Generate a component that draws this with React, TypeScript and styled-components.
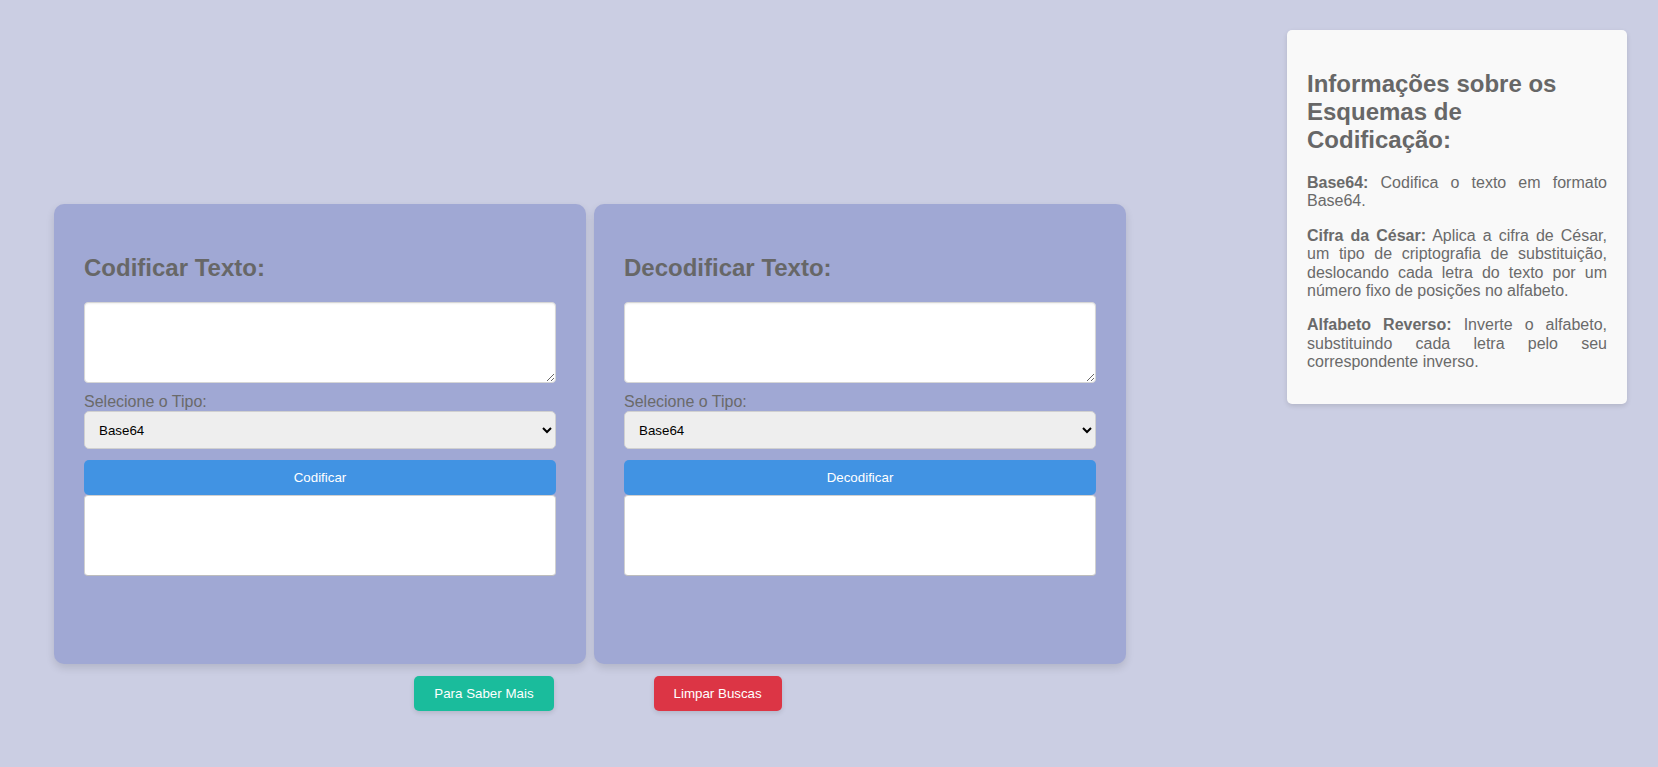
import React from "react";
import styled, { createGlobalStyle } from "styled-components";

const GlobalStyle = createGlobalStyle`
  html, body {
    margin: 0;
    padding: 0;
  }
  body {
    background: #cbcee3;
    font-family: "Liberation Sans", Arial, sans-serif;
    color: #666;
  }
`;

const Page = styled.div`
  display: flex;
  justify-content: space-between;
  align-items: flex-start;
  min-height: 767px;
  padding-right: 31px;
  box-sizing: border-box;
`;

const Main = styled.main`
  display: flex;
  flex-direction: column;
  padding-top: 204px;
`;

const Cards = styled.div`
  display: flex;
  gap: 8px;
  margin-left: 54px;
`;

const Card = styled.section`
  width: 472px;
  height: 400px;
  padding: 30px;
  background: #a0a8d4;
  border-radius: 10px;
  box-shadow: 0 4px 8px rgba(0, 0, 0, 0.12);
  display: flex;
  flex-direction: column;
`;

const CardTitle = styled.h2`
  font-size: 24px;
  font-weight: bold;
  color: #676767;
  margin: 0.83em 0;
  line-height: normal;
`;

const InputArea = styled.textarea`
  box-sizing: border-box;
  width: 100%;
  height: 81px;
  margin: 0 0 10px;
  padding: 8px;
  border: 1px solid #d6d6d6;
  border-radius: 4px;
  background: #fff;
  font-family: "Liberation Sans", Arial, sans-serif;
  font-size: 14px;
  box-shadow: inset 0 1px 2px rgba(0, 0, 0, 0.06);
`;

const Label = styled.label`
  display: block;
  font-size: 16px;
  line-height: 18.4px;
  color: #6a6a6a;
`;

const Select = styled.select`
  box-sizing: border-box;
  width: 100%;
  height: 38px;
  padding: 10px;
  border: 1px solid #d0d0d0;
  border-radius: 5px;
  background: #eeeeee;
  color: #000;
  font-family: "Liberation Sans", Arial, sans-serif;
  font-size: 13.33px;
`;

const ActionButton = styled.button`
  box-sizing: border-box;
  width: 100%;
  height: 35px;
  margin-top: 11px;
  border: none;
  border-radius: 5px;
  background: #4193e3;
  color: #fff;
  font-family: "Liberation Sans", Arial, sans-serif;
  font-size: 13.33px;
  cursor: pointer;
`;

const Output = styled.div`
  box-sizing: border-box;
  width: 100%;
  height: 81px;
  background: #fff;
  border: 1px solid #d0d0d0;
  border-bottom-color: #bdbdbd;
  border-radius: 4px;
`;

const Actions = styled.div`
  display: flex;
  justify-content: center;
  gap: 100px;
  width: 1180px;
  margin: 12px 0 0 8px;
`;

const PillButton = styled.button<{ $bg: string }>`
  height: 35px;
  padding: 0 20px;
  border: none;
  border-radius: 5px;
  background: ${(p) => p.$bg};
  color: #fff;
  font-family: "Liberation Sans", Arial, sans-serif;
  font-size: 13.33px;
  box-shadow: 0 2px 5px rgba(0, 0, 0, 0.12);
  cursor: pointer;
`;

const InfoBox = styled.aside`
  width: 300px;
  margin-top: 30px;
  padding: 20px;
  background: #f9f9f9;
  border-radius: 5px;
  box-shadow: 0 2px 5px rgba(0, 0, 0, 0.12);
  min-height: 334px;
`;

const InfoTitle = styled.h2`
  font-size: 24px;
  font-weight: bold;
  color: #676767;
  margin: 20px 0 20px;
  line-height: normal;
`;

const InfoText = styled.p`
  font-size: 16px;
  line-height: 18.4px;
  text-align: justify;
  color: #6a6a6a;
  margin: 16px 0;
  &:last-child {
    margin-bottom: 0;
  }
`;

const Term = styled.strong`
  font-weight: bold;
`;

function CoderCard({ title, action }: { title: string; action: string }) {
  return (
    <Card>
      <CardTitle>{title}</CardTitle>
      <InputArea />
      <Label>Selecione o Tipo:</Label>
      <Select defaultValue="base64">
        <option value="base64">Base64</option>
        <option value="cesar">Cifra de César</option>
        <option value="reverso">Alfabeto Reverso</option>
      </Select>
      <ActionButton>{action}</ActionButton>
      <Output />
    </Card>
  );
}

export default function App() {
  return (
    <>
      <GlobalStyle />
      <Page>
        <Main>
          <Cards>
            <CoderCard title="Codificar Texto:" action="Codificar" />
            <CoderCard title="Decodificar Texto:" action="Decodificar" />
          </Cards>
          <Actions>
            <PillButton $bg="#1abc9c">Para Saber Mais</PillButton>
            <PillButton $bg="#dc3545">Limpar Buscas</PillButton>
          </Actions>
        </Main>
        <InfoBox>
          <InfoTitle>Informações sobre os Esquemas de Codificação:</InfoTitle>
          <InfoText>
            <Term>Base64:</Term> Codifica o texto em formato Base64.
          </InfoText>
          <InfoText>
            <Term>Cifra da César:</Term> Aplica a cifra de César, um tipo de
            criptografia de substituição, deslocando cada letra do texto por um
            número fixo de posições no alfabeto.
          </InfoText>
          <InfoText>
            <Term>Alfabeto Reverso:</Term> Inverte o alfabeto, substituindo
            cada letra pelo seu correspondente inverso.
          </InfoText>
        </InfoBox>
      </Page>
    </>
  );
}
